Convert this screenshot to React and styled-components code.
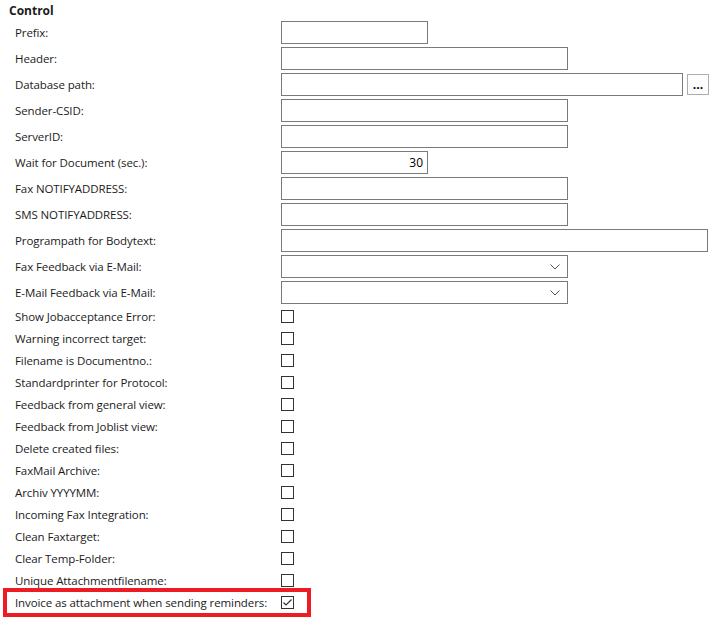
import React from 'react'
import styled, { createGlobalStyle } from 'styled-components'

const GlobalStyle = createGlobalStyle`
    body {
        margin: 0;
        background: #ffffff;
        font-family: "Open Sans", "Noto Sans", sans-serif;
        font-size: 11.5px;
        color: #1b1b1b;
    }
`;

const Page = styled.div`
    width: 714px;
    height: 618px;
    overflow: hidden;
`;

const GroupTitle = styled.div`
    height: 21px;
    box-sizing: border-box;
    padding: 2px 0 0 9px;
    font-weight: 700;
    font-size: 12px;
    line-height: 17px;
`;

const CheckList = styled.div`
    margin-top: -2px;
`;

const Row = styled.div`
    position: relative;
    display: flex;
    align-items: center;
    height: ${p => (p.$check ? 22 : 26)}px;
    padding-left: 15px;
    box-sizing: border-box;
    padding-bottom: ${p => (p.$check ? 0 : 3)}px;

    ${p => p.$marked && `
        &::after {
            content: '';
            position: absolute;
            left: 3px;
            top: -3px;
            width: 308px;
            height: 29px;
            border: 4px solid #ed1c24;
            box-sizing: border-box;
            pointer-events: none;
        }
    `}
`;

const Label = styled.span`
    width: 266px;
    flex: none;
    white-space: nowrap;
    letter-spacing: -0.1px;
`;

const TextBox = styled.div`
    width: ${p => p.$width}px;
    height: 23px;
    box-sizing: border-box;
    border: 1px solid #7a7a7a;
    background: #fff;
    display: flex;
    align-items: center;
    justify-content: flex-end;
    padding-right: 4px;
    font-size: 12px;
    color: #000;
`;

const PathGroup = styled.div`
    display: flex;
    align-items: center;
    gap: 4px;
`;

const BrowseButton = styled.div`
    width: 22px;
    height: 21px;
    box-sizing: border-box;
    border: 1px solid #adadad;
    background: #fdfdfd;
    display: flex;
    align-items: flex-end;
    justify-content: center;
    font-weight: 700;
    font-size: 12px;
    line-height: 14px;
    padding-bottom: 2px;
    color: #000;
`;

const SelectBox = styled(TextBox)`
    padding-right: 7px;
    color: #5a5a5a;
`;

const CheckBox = styled.div`
    width: 13px;
    height: 13px;
    box-sizing: border-box;
    border: 1px solid #333;
    background: #fff;
    display: flex;
    align-items: center;
    justify-content: center;
`;

const Chevron = () => (
    <svg width="10" height="6" viewBox="0 0 10 6">
        <path d="M0.5 0.5 L5 5 L9.5 0.5" fill="none" stroke="#555" strokeWidth="1" />
    </svg>
);

const Tick = () => (
    <svg width="11" height="11" viewBox="0 0 11 11">
        <path d="M1.5 5.5 L4 8 L9.5 2.5" fill="none" stroke="#333" strokeWidth="1.2" />
    </svg>
);

const fields = [
    { label: 'Prefix:', width: 147 },
    { label: 'Header:', width: 287 },
    { label: 'Database path:', width: 402, browse: true },
    { label: 'Sender-CSID:', width: 287 },
    { label: 'ServerID:', width: 287 },
    { label: 'Wait for Document (sec.):', width: 147, value: '30' },
    { label: 'Fax NOTIFYADDRESS:', width: 287 },
    { label: 'SMS NOTIFYADDRESS:', width: 287 },
    { label: 'Programpath for Bodytext:', width: 427 },
    { label: 'Fax Feedback via E-Mail:', width: 287, select: true },
    { label: 'E-Mail Feedback via E-Mail:', width: 287, select: true },
];

const checks = [
    { label: 'Show Jobacceptance Error:' },
    { label: 'Warning incorrect target:' },
    { label: 'Filename is Documentno.:' },
    { label: 'Standardprinter for Protocol:' },
    { label: 'Feedback from general view:' },
    { label: 'Feedback from Joblist view:' },
    { label: 'Delete created files:' },
    { label: 'FaxMail Archive:' },
    { label: 'Archiv YYYYMM:' },
    { label: 'Incoming Fax Integration:' },
    { label: 'Clean Faxtarget:' },
    { label: 'Clear Temp-Folder:' },
    { label: 'Unique Attachmentfilename:' },
    { label: 'Invoice as attachment when sending reminders:', checked: true, marked: true },
];

function FieldControl({ field }) {
    if (field.select) {
        return (
            <SelectBox $width={field.width}>
                <Chevron />
            </SelectBox>
        );
    }
    if (field.browse) {
        return (
            <PathGroup>
                <TextBox $width={field.width} />
                <BrowseButton>...</BrowseButton>
            </PathGroup>
        );
    }
    return <TextBox $width={field.width}>{field.value}</TextBox>;
}

export default function App() {
    return (
        <Page>
            <GlobalStyle />
            <GroupTitle>Control</GroupTitle>
            {fields.map(f => (
                <Row key={f.label}>
                    <Label>{f.label}</Label>
                    <FieldControl field={f} />
                </Row>
            ))}
            <CheckList>
                {checks.map(c => (
                    <Row key={c.label} $check $marked={c.marked}>
                        <Label>{c.label}</Label>
                        <CheckBox>{c.checked && <Tick />}</CheckBox>
                    </Row>
                ))}
            </CheckList>
        </Page>
    )
}
